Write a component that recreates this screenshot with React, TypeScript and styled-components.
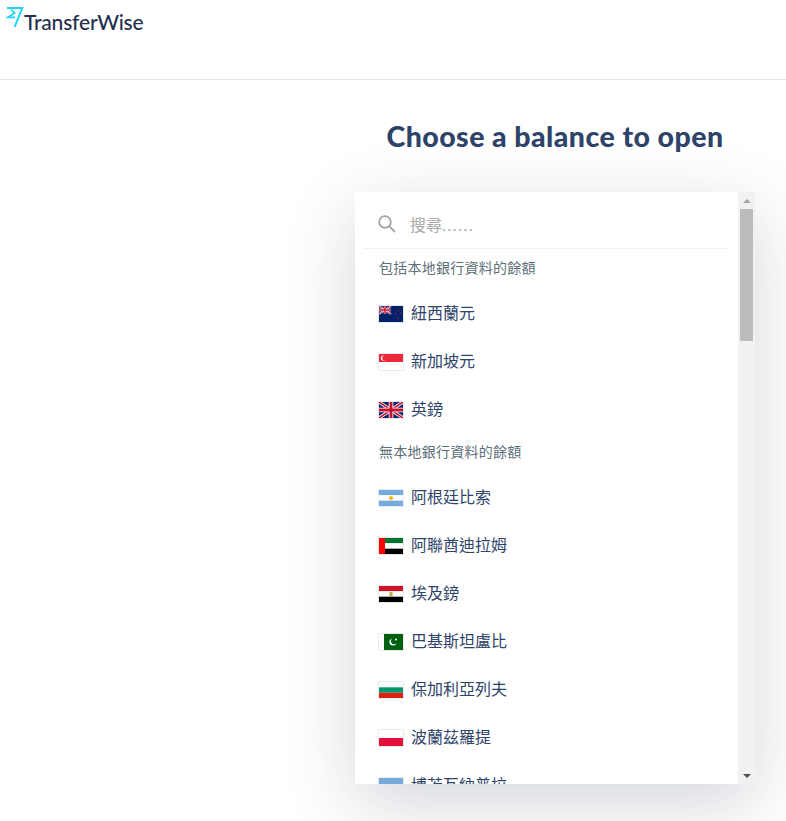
import styled, { createGlobalStyle } from "styled-components";

const GlobalStyle = createGlobalStyle`
  html, body {
    margin: 0;
    height: 100%;
    overflow: hidden;
    background: #fff;
  }
  * {
    box-sizing: border-box;
  }
`;

const CJK = `"Lato", "Noto Sans CJK TC", sans-serif`;

const Header = styled.header`
  height: 80px;
  border-bottom: 1px solid #e5e5e5;
  padding: 7px 0 0 6px;
`;

const Brand = styled.div`
  display: flex;
  align-items: flex-start;
  height: 26px;
`;

const BrandName = styled.span`
  font-family: "Lato", sans-serif;
  font-weight: 500;
  font-size: 21px;
  line-height: 21px;
  margin: 4px 0 0 0;
  color: #25304f;
  letter-spacing: -0.2px;
`;

const Main = styled.main`
  width: 400px;
  margin-left: 355px;
`;

const Title = styled.h1`
  margin: 0;
  padding-top: 39px;
  height: 112px;
  font-family: "Lato", sans-serif;
  font-weight: 900;
  font-size: 28.5px;
  line-height: 34px;
  letter-spacing: 0.45px;
  text-align: center;
  color: #2e4369;
`;

const Panel = styled.section`
  display: flex;
  height: 592px;
  background: #fff;
  box-shadow: 0 20px 66px 0 rgba(34, 48, 73, 0.2);
`;

const ListArea = styled.div`
  flex: 1;
  min-width: 0;
  overflow: hidden;
`;

const SearchRow = styled.div`
  display: flex;
  align-items: center;
  gap: 14px;
  height: 57px;
  margin: 0 8px 0 8px;
  padding: 8px 0 0 15px;
  border-bottom: 1px solid #f0f1f3;
`;

const SearchText = styled.span`
  font-family: ${CJK};
  font-size: 16px;
  color: #a6a8aa;
`;

const SearchDots = styled.span`
  letter-spacing: 1.6px;
`;

const GroupLabel = styled.div`
  display: flex;
  align-items: center;
  height: 40px;
  padding: 0 0 5px 24px;
  font-family: ${CJK};
  font-size: 14px;
  letter-spacing: 0.25px;
  color: #5d7079;
`;

const Row = styled.div`
  display: flex;
  align-items: center;
  gap: 7px;
  height: 48px;
  padding-left: 23px;
  font-family: ${CJK};
  font-size: 16px;
  color: #2e4369;
`;

const CurrencyName = styled.span`
  margin-bottom: 2px;
`;

const FlagFrame = styled.span`
  display: block;
  flex: none;
  width: 26px;
  height: 18px;
  margin-top: 2px;
  border: 1px solid #e8e9ec;
  border-radius: 1px;
  line-height: 0;
  background: #fff;
`;

const Track = styled.div`
  display: flex;
  flex: none;
  flex-direction: column;
  width: 17px;
  background: #f1f1f1;
`;

const ArrowSlot = styled.div`
  display: flex;
  flex: none;
  align-items: center;
  justify-content: center;
  height: 17px;
`;

const Arrow = styled.span<{ $down?: boolean }>`
  width: 0;
  height: 0;
  border-left: 4px solid transparent;
  border-right: 4px solid transparent;
  ${({ $down }) =>
    $down ? "border-top: 4px solid #505050;" : "border-bottom: 4px solid #a3a3a3;"}
`;

const Thumb = styled.div`
  flex: none;
  height: 132px;
  margin: 0 2px;
  background: #bcbcbc;
`;

const Spacer = styled.div`
  flex: 1;
`;

const Flag = ({ children }: { children: React.ReactNode }) => (
  <FlagFrame>
    <svg width="24" height="16" viewBox="0 0 24 16">
      {children}
    </svg>
  </FlagFrame>
);

const Stripes = ({ colors }: { colors: string[] }) => (
  <>
    {colors.map((c, i) => (
      <rect key={i} x="0" y={(16 / colors.length) * i} width="24" height={16 / colors.length} fill={c} />
    ))}
  </>
);

const UnionJack = ({ w, h }: { w: number; h: number }) => (
  <>
    <rect width={w} height={h} fill="#012169" />
    <path d={`M0 0L${w} ${h}M${w} 0L0 ${h}`} stroke="#fff" strokeWidth={h / 5} />
    <path d={`M0 0L${w} ${h}M${w} 0L0 ${h}`} stroke="#c8102e" strokeWidth={h / 10} />
    <path d={`M${w / 2} 0V${h}M0 ${h / 2}H${w}`} stroke="#fff" strokeWidth={h / 3.5} />
    <path d={`M${w / 2} 0V${h}M0 ${h / 2}H${w}`} stroke="#c8102e" strokeWidth={h / 5.5} />
  </>
);

const FLAGS: Record<string, React.ReactNode> = {
  nzd: (
    <>
      <rect width="24" height="16" fill="#012169" />
      <UnionJack w={12} h={8} />
      <g fill="#c8102e">
        <circle cx="19" cy="4" r="0.8" />
        <circle cx="21.5" cy="7" r="0.8" />
        <circle cx="16.5" cy="7.5" r="0.8" />
        <circle cx="19" cy="12" r="0.8" />
      </g>
    </>
  ),
  sgd: (
    <>
      <Stripes colors={["#ed2939", "#fff"]} />
      <circle cx="4.5" cy="4" r="2.6" fill="#fff" />
      <circle cx="5.6" cy="4" r="2.4" fill="#ed2939" />
    </>
  ),
  gbp: <UnionJack w={24} h={16} />,
  ars: (
    <>
      <Stripes colors={["#74acdf", "#fff", "#74acdf"]} />
      <circle cx="12" cy="8" r="2" fill="#f6b40e" />
    </>
  ),
  aed: (
    <>
      <Stripes colors={["#00732f", "#fff", "#000"]} />
      <rect width="6" height="16" fill="#ff0000" />
    </>
  ),
  egp: (
    <>
      <Stripes colors={["#ce1126", "#fff", "#000"]} />
      <rect x="10.5" y="6" width="3" height="4" fill="#c8a74a" />
    </>
  ),
  pkr: (
    <>
      <rect width="24" height="16" fill="#fff" />
      <rect x="5" width="19" height="16" fill="#01600f" />
      <circle cx="14" cy="8" r="3.6" fill="#fff" />
      <circle cx="15.3" cy="7" r="3.3" fill="#01600f" />
      <circle cx="17" cy="5.5" r="1" fill="#fff" />
    </>
  ),
  bgn: <Stripes colors={["#fff", "#00966e", "#d62612"]} />,
  pln: <Stripes colors={["#fff", "#e2103c"]} />,
  bwp: <rect width="24" height="16" fill="#75aadb" />,
};

const WITH_DETAILS = [
  { code: "nzd", name: "紐西蘭元" },
  { code: "sgd", name: "新加坡元" },
  { code: "gbp", name: "英鎊" },
];

const WITHOUT_DETAILS = [
  { code: "ars", name: "阿根廷比索" },
  { code: "aed", name: "阿聯酋迪拉姆" },
  { code: "egp", name: "埃及鎊" },
  { code: "pkr", name: "巴基斯坦盧比" },
  { code: "bgn", name: "保加利亞列夫" },
  { code: "pln", name: "波蘭茲羅提" },
  { code: "bwp", name: "博茨瓦納普拉" },
];

const Logo = () => (
  <svg width="18" height="20" viewBox="0 0 18 20" fill="none" stroke="#1ed4ff">
    <path d="M1 1H16.2L8.6 20" strokeWidth="2" />
    <path d="M5 2.5L8.6 6L1.8 10.4H9" strokeWidth="1.7" />
  </svg>
);

const SearchIcon = () => (
  <svg width="18" height="18" viewBox="0 0 18 18" fill="none" stroke="#a3a3a3" strokeWidth="1.8">
    <circle cx="7" cy="7" r="5.8" />
    <path d="M11.2 11.2L17 17" />
  </svg>
);

const CurrencyRow = ({ code, name }: { code: string; name: string }) => (
  <Row>
    <Flag>{FLAGS[code]}</Flag>
    <CurrencyName>{name}</CurrencyName>
  </Row>
);

const App = () => {
  return (
    <>
      <GlobalStyle />
      <Header>
        <Brand>
          <Logo />
          <BrandName>TransferWise</BrandName>
        </Brand>
      </Header>
      <Main>
        <Title>Choose a balance to open</Title>
        <Panel>
          <ListArea>
            <SearchRow>
              <SearchIcon />
              <SearchText>
                搜尋<SearchDots>......</SearchDots>
              </SearchText>
            </SearchRow>
            <GroupLabel>包括本地銀行資料的餘額</GroupLabel>
            {WITH_DETAILS.map((c) => (
              <CurrencyRow key={c.code} {...c} />
            ))}
            <GroupLabel>無本地銀行資料的餘額</GroupLabel>
            {WITHOUT_DETAILS.map((c) => (
              <CurrencyRow key={c.code} {...c} />
            ))}
          </ListArea>
          <Track>
            <ArrowSlot>
              <Arrow />
            </ArrowSlot>
            <Thumb />
            <Spacer />
            <ArrowSlot>
              <Arrow $down />
            </ArrowSlot>
          </Track>
        </Panel>
      </Main>
    </>
  );
};

export default App;
